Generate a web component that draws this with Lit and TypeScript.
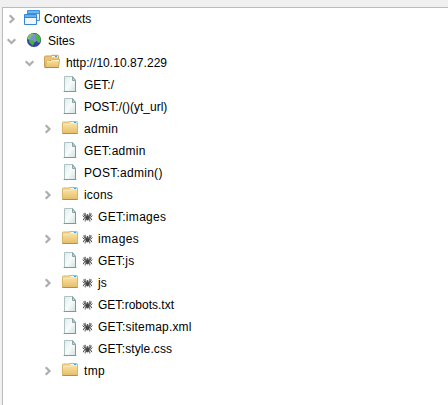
import { LitElement, html, css, svg, nothing } from "lit";
import { customElement, property } from "lit/decorators.js";

type Icon = "contexts" | "globe" | "open" | "folder" | "file";
interface Node {
  label: string;
  icon: Icon;
  depth: number;
  arrow?: "right" | "down";
  spider?: boolean;
  /** extra width in px, spread over the label's letters */
  extra?: number;
}

const NODES: Node[] = [
  { label: "Contexts", icon: "contexts", depth: 0, arrow: "right" },
  { label: "Sites", icon: "globe", depth: 0, arrow: "down" },
  { label: "http://10.10.87.229", icon: "open", depth: 1, arrow: "down", extra: 1 },
  { label: "GET:/", icon: "file", depth: 2 },
  { label: "POST:/()(yt_url)", icon: "file", depth: 2 },
  { label: "admin", icon: "folder", depth: 2, arrow: "right", extra: 1.5 },
  { label: "GET:admin", icon: "file", depth: 2, extra: 2.3 },
  { label: "POST:admin()", icon: "file", depth: 2, extra: 3.3 },
  { label: "icons", icon: "folder", depth: 2, arrow: "right", extra: 1 },
  { label: "GET:images", icon: "file", depth: 2, spider: true, extra: 3 },
  { label: "images", icon: "folder", depth: 2, arrow: "right", spider: true, extra: 2.6 },
  { label: "GET:js", icon: "file", depth: 2, spider: true, extra: 1 },
  { label: "js", icon: "folder", depth: 2, arrow: "right", spider: true },
  { label: "GET:robots.txt", icon: "file", depth: 2, spider: true },
  { label: "GET:sitemap.xml", icon: "file", depth: 2, spider: true, extra: 3 },
  { label: "GET:style.css", icon: "file", depth: 2, spider: true, extra: 1.5 },
  { label: "tmp", icon: "folder", depth: 2, arrow: "right", extra: 1 },
];

const ICONS = {
  contexts: svg`
    <rect x="3" y="0" width="13" height="11" rx="1" fill="#3d92dc"/>
    <path d="M4 1h11v2H4z" fill="#6cb8f2"/>
    <rect x="4" y="4" width="11" height="6" fill="#e6eef6"/>
    <rect x="0" y="4" width="13" height="11" rx="1" fill="#3388d4"/>
    <path d="M1 5h11v2H1z" fill="#62b2f0"/>
    <rect x="1" y="8" width="11" height="6" fill="#f2f4f7"/>`,
  globe: svg`
    <circle cx="8" cy="8" r="7" fill="#3b3fae"/>
    <circle cx="7" cy="6" r="4.500" fill="#93a3e4" opacity=".8"/>
    <path d="M1.300 7Q2 2 6.500 1.200L7.500 2.800 5.500 4 4 6.500 2.500 7.500z" fill="#78cc68"/>
    <path d="M3 8.500L6 8l2.500 1.500L8 11.500l-1.200 2L5 12 3.500 10.500z" fill="#3dbb2c"/>
    <path d="M9 1.200Q13.800 2.500 14.800 7L14.200 10.500 12 10.500l-1.500-2L9 7l1-3z" fill="#4cba3c"/>
    <circle cx="8" cy="8" r="6.800" fill="none" stroke="#34507a" stroke-width=".4" opacity=".6"/>`,
  open: svg`
    <path d="M.5 13V3q0-1 1-1H7l.7-.7h5.800q1 0 1 1V13z" fill="#e9c476" stroke="#cda254"/>
    <path d="M8 2h6v1.300H8z" fill="#fff8de"/><path d="M11 2.500h2" stroke="#2fa8e8"/>
    <path d="M2.500 7.500L7 6.500l1-1h7.700L14.500 13.500H1z" fill="url(#fold)" stroke="#cfa252" stroke-width=".8"/>
    <path d="M3 7.500h4.500l1-1.200h6.500" fill="none" stroke="#fff0c0"/>
    <path d="M.7 13.500h14" stroke="#ba893d"/>`,
  folder: svg`
    <path d="M.5 13.500V2.500q0-.5 1-.5H7l.7-.5h6.800q1 0 1 1v11z" fill="#f1d998" stroke="#d9b566"/>
    <path d="M8.500 2H15v1.200H8z" fill="#fff8e0"/><path d="M12 2.500h2.300" stroke="#2ca9ec"/>
    <path d="M1 4.500h6l1-1h7V13H1z" fill="url(#fold)"/>
    <path d="M1 4.400h6.300l1-.9H15" fill="none" stroke="#fbe9b2" stroke-width=".8"/>
    <path d="M.5 13.500h15" stroke="#ba8c44"/>`,
  file: svg`
    <path d="M1 15.500h14" stroke="#bcc8c8" opacity=".6"/>
    <path d="M2.500.5H10l3.500 3.500v11.500h-11z" fill="url(#page)" stroke="#adc2c2"/>
    <path d="M10.500.5v4h3z" fill="#c4dad8" stroke="#809c9c" stroke-width=".9"/>
    <path d="M2 15.500h12M13.500 5v10" stroke="#839999" fill="none"/>`,
};

@customElement("tree-icon")
export class TreeIcon extends LitElement {
  @property() name: Icon = "file";
  static styles = css`
    :host { display: block; width: 16px; height: 16px; flex: none; }
    svg { display: block; }
  `;
  render() {
    return html`<svg width="16" height="16" viewBox="0 0 16 16">
      <defs>
        <linearGradient id="fold" x2="0" y2="1"><stop stop-color="#fae3a2"/><stop offset="1" stop-color="#e6be6c"/></linearGradient>
        <linearGradient id="page" x2="1" y2="1"><stop stop-color="#dfecea"/><stop offset=".5" stop-color="#f8fbfb"/><stop offset="1" stop-color="#cfe2de"/></linearGradient>
      </defs>${ICONS[this.name]}</svg>`;
  }
}

@customElement("app-root")
export class AppRoot extends LitElement {
  static styles = css`
    :host {
      display: block; box-sizing: border-box; height: 405px; overflow: hidden;
      padding: 7px 0 0 2px; background: #f0f0f0;
      font: 12px/22px "Liberation Sans", Arial, sans-serif; color: #000;
    }
    .tree { height: 398px; box-sizing: border-box; background: #fff; border: solid #bcbcbc; border-width: 1px 0 0 1px; }
    .row { display: flex; align-items: center; height: 22px; white-space: pre; }
    .d0 { padding-left: 3px; }
    .d1 { padding-left: 21px; }
    .d2 { padding-left: 39px; }
    .arrow { width: 12px; height: 12px; margin-right: 6px; flex: none; }
    .d1 .arrow, .d2 .arrow { margin-right: 8px; }
    .arrow path { fill: none; stroke: #adadad; stroke-width: 2.2; }
    tree-icon { margin-bottom: 2px; }
    .globe { margin-left: 2px; margin-right: 6px; }
    .contexts { margin-right: 4px; }
    .open, .folder, .file { margin-right: 6px; }
    .spiderly { margin-right: 4px; }
    .spider { width: 11px; height: 10px; margin: 0 5px 1px 0; flex: none; }
  `;

  arrow(dir?: "right" | "down") {
    return html`<svg class="arrow" viewBox="0 0 12 12">${dir === "right"
      ? svg`<path d="M3.700 2.200l3.800 3.800-3.800 3.800"/>`
      : dir === "down" ? svg`<path d="M1.700 4.200l3.800 3.800 3.800-3.800"/>` : nothing}</svg>`;
  }

  spider() {
    return html`<svg class="spider" viewBox="0 0 11 10">
      <path d="M4.500 4.500L3.200 3V.8M4.500 5L2 3.200V1.200M4.500 5.500L2 5 .6 3.500M4.500 5.800L2 6.300 1.200 8.200M4.500 6.500L3.200 7.500v2M6.500 4.500L7.800 3V.8M6.500 5L9 3.200V1.200M6.500 5.500L9 5l1.400-1.500M6.500 5.800L9 6.300l.8 1.900M6.500 6.500l1.300 1v2" fill="none" stroke="#444" stroke-width=".9"/>
      <ellipse cx="5.500" cy="5.800" rx="1.700" ry="2.700" fill="#444"/><circle cx="5.500" cy="3.100" r="1" fill="#555"/>
    </svg>`;
  }

  render() {
    return html`<div class="tree">${NODES.map((n) => html`
      <div class="row d${n.depth}">${this.arrow(n.arrow)}<tree-icon class="${n.icon} ${n.spider ? "spiderly" : ""}" .name=${n.icon}></tree-icon>${n.spider ? this.spider() : nothing}<span style="letter-spacing:${(n.extra ?? 0) / n.label.length}px">${n.label}</span></div>`)}</div>`;
  }
}
